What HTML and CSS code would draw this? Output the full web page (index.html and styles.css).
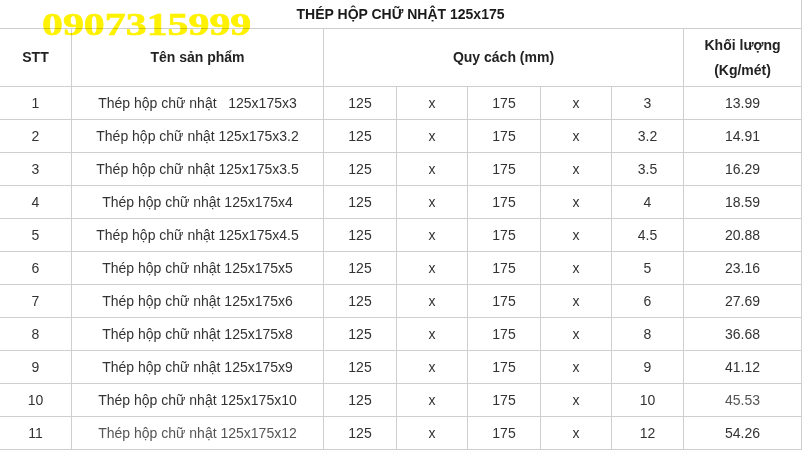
FILE: index.html
```html
<!DOCTYPE html>
<html lang="vi">
<head>
<meta charset="utf-8">
<title>Thép hộp chữ nhật 125x175</title>
<link rel="stylesheet" href="styles.css">
</head>
<body>
<div class="page">
  <div class="phone">0907315999</div>
  <table class="spec">
    <colgroup>
      <col class="c-stt"><col class="c-name"><col class="c-a"><col class="c-x1"><col class="c-b"><col class="c-x2"><col class="c-t"><col class="c-w">
    </colgroup>
    <tr class="title-row"><td colspan="8" class="title">THÉP HỘP CHỮ NHẬT 125x175</td></tr>
    <tr class="head-row">
      <th>STT</th>
      <th>Tên sản phẩm</th>
      <th colspan="5">Quy cách (mm)</th>
      <th>Khối lượng<br>(Kg/mét)</th>
    </tr>
    <tr><td>1</td><td>Thép hộp chữ nhật &nbsp; 125x175x3</td><td>125</td><td>x</td><td>175</td><td>x</td><td>3</td><td>13.99</td></tr>
    <tr><td>2</td><td>Thép hộp chữ nhật 125x175x3.2</td><td>125</td><td>x</td><td>175</td><td>x</td><td>3.2</td><td>14.91</td></tr>
    <tr><td>3</td><td>Thép hộp chữ nhật 125x175x3.5</td><td>125</td><td>x</td><td>175</td><td>x</td><td>3.5</td><td>16.29</td></tr>
    <tr><td>4</td><td>Thép hộp chữ nhật 125x175x4</td><td>125</td><td>x</td><td>175</td><td>x</td><td>4</td><td>18.59</td></tr>
    <tr><td>5</td><td>Thép hộp chữ nhật 125x175x4.5</td><td>125</td><td>x</td><td>175</td><td>x</td><td>4.5</td><td>20.88</td></tr>
    <tr><td>6</td><td>Thép hộp chữ nhật 125x175x5</td><td>125</td><td>x</td><td>175</td><td>x</td><td>5</td><td>23.16</td></tr>
    <tr><td>7</td><td>Thép hộp chữ nhật 125x175x6</td><td>125</td><td>x</td><td>175</td><td>x</td><td>6</td><td>27.69</td></tr>
    <tr><td>8</td><td>Thép hộp chữ nhật 125x175x8</td><td>125</td><td>x</td><td>175</td><td>x</td><td>8</td><td>36.68</td></tr>
    <tr><td>9</td><td>Thép hộp chữ nhật 125x175x9</td><td>125</td><td>x</td><td>175</td><td>x</td><td>9</td><td>41.12</td></tr>
    <tr><td>10</td><td>Thép hộp chữ nhật 125x175x10</td><td>125</td><td>x</td><td>175</td><td>x</td><td>10</td><td class="light">45.53</td></tr>
    <tr><td>11</td><td class="light">Thép hộp chữ nhật 125x175x12</td><td>125</td><td>x</td><td>175</td><td>x</td><td>12</td><td>54.26</td></tr>
  </table>
</div>
</body>
</html>
```

FILE: styles.css
```css
html, body {
  margin: 0;
  padding: 0;
  background: #ffffff;
}

.page {
  position: relative;
  width: 803px;
  height: 460px;
  overflow: hidden;
  font-family: "Liberation Sans", Arial, sans-serif;
  font-size: 14px;
  color: #333333;
}

.spec {
  border-collapse: collapse;
  table-layout: fixed;
  width: 803px;
  margin: -1px 0 0 -1px;
}

.c-stt { width: 72px; }
.c-name { width: 252px; }
.c-a { width: 73px; }
.c-x1 { width: 71px; }
.c-b { width: 73px; }
.c-x2 { width: 71px; }
.c-t { width: 72px; }
.c-w { width: 118px; }

.spec td,
.spec th {
  border: 1px solid #cfcfcf;
  text-align: center;
  vertical-align: middle;
  padding: 0;
  height: 32px;
  line-height: 16px;
  white-space: nowrap;
}

.spec .title-row td {
  height: 28px;
  font-weight: bold;
  color: #1a1a1a;
  border-left-color: transparent;
  border-top-color: transparent;
}

.spec .head-row th {
  height: 57px;
  line-height: 25px;
  font-weight: bold;
  color: #222222;
}

.spec tr > :first-child {
  border-left-color: transparent;
}

.spec .light {
  color: #555555;
}

.phone {
  position: absolute;
  left: 42px;
  top: 8px;
  font-family: "Liberation Serif", "Times New Roman", serif;
  font-weight: bold;
  font-size: 31px;
  line-height: 34px;
  color: #fff200;
  transform: scaleX(1.35);
  transform-origin: left top;
  mix-blend-mode: multiply;
  -webkit-text-stroke: 0.6px #fff200;
  z-index: 2;
}
```
